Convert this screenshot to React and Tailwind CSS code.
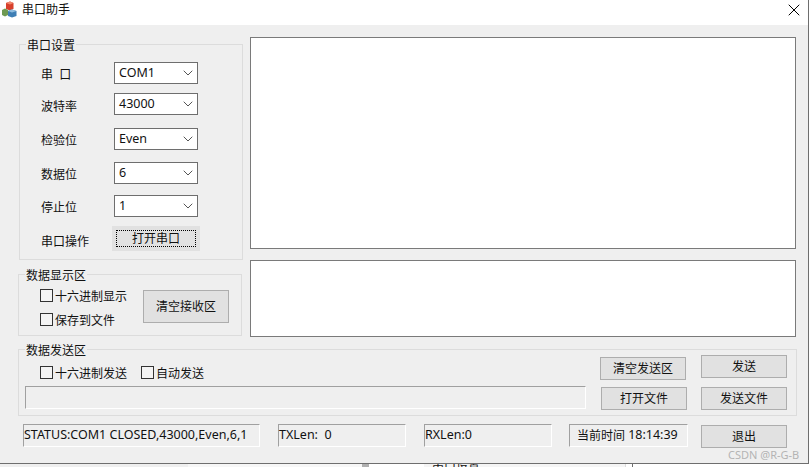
import React from "react";
import { ChevronDown, X } from "lucide-react";

const font = { fontFamily: '"Noto Sans", "Noto Sans CJK SC", sans-serif' };

const Combo = ({ label, value, labelClass = "pt-[3px]", className = "" }) => (
  <div className={`flex items-center h-[22px] ${className}`}>
    <span className={`w-[73px] ml-[21px] whitespace-pre ${labelClass}`}>{label}</span>
    <div className="w-[84px] h-[22px] flex items-center justify-between bg-white border border-[#6e6e6e] pl-[4px] pr-px text-[12.5px]">
      <span>{value}</span>
      <ChevronDown className="w-4 h-4 text-[#555]" strokeWidth={1.5} />
    </div>
  </div>
);

const Check = ({ label, className = "" }) => (
  <label className={`flex items-center ${className}`}>
    <span className="w-[13px] h-[13px] border border-[#333] bg-[#f4f4f4] mr-[2px]" />
    <span className="pt-[3px]">{label}</span>
  </label>
);

const Btn = ({ children, className = "" }) => (
  <button className={`w-[86px] h-[23px] bg-[#e1e1e1] border border-[#adadad] flex items-center justify-center ${className}`}>
    {children}
  </button>
);

const Sunken = ({ children, className = "" }) => (
  <div className={`h-[23px] flex items-center border border-t-[#a0a0a0] border-l-[#a0a0a0] border-r-white border-b-white ${className}`}>
    {children}
  </div>
);

const Group = ({ title, className = "", children }) => (
  <fieldset className={`border border-[#dcdcdc] ${className}`}>
    <legend className="ml-[6px] px-px h-[18px] leading-[22px]">{title}</legend>
    {children}
  </fieldset>
);

const AppIcon = () => (
  <svg width="16" height="17" viewBox="0 0 16 17" className="mt-px">
    <path d="M5 2l4-1.500 3.500 1.500v6L9 9.500 5 8z" fill="#d8402c" />
    <path d="M5 2l4 1.500 3.500-1.500L9 .5z" fill="#f08a70" />
    <path d="M1 9l3-1.500 3 1.500v5l-3 1.500-3-1.500z" fill="#6f9a52" />
    <path d="M7 10l3.500-1.500L15.500 10v5l-4.500 1.500L7 15z" fill="#3f7fb5" />
    <path d="M7 10l4 1.500 4.500-1.500-5-1.500z" fill="#8fbde0" />
  </svg>
);

export default function App() {
  return (
    <div className="w-[810px] h-[467px] overflow-hidden bg-white text-[12px] text-[#111] relative" style={font}>
      <div className="h-[464px] w-[809px] border-r border-b border-[#6e6e6e] flex flex-col">
        <div className="h-[25px] bg-white flex items-start pl-[1px]">
          <AppIcon />
          <span className="ml-[5px] leading-[19px]">串口助手</span>
          <X className="ml-auto mr-[4px] w-5 h-5 text-black" strokeWidth={1.2} />
        </div>

        <div className="flex-1 bg-[#efefef] pt-[10px] pl-[18px]">
          <div className="flex">
            <div className="w-[225px]">
              <Group title="串口设置" className="ml-px w-[224px] h-[225px]">
                <Combo label="串  口" value="COM1" className="mt-[9px]" />
                <Combo label="波特率" value="43000" labelClass="pt-[6px]" className="mt-[9px]" />
                <Combo label="检验位" value="Even" labelClass="pt-[3px]" className="mt-[13px]" />
                <Combo label="数据位" value="6" className="mt-[12px]" />
                <Combo label="停止位" value="1" className="mt-[11px]" />
                <div className="flex items-center mt-[9px]">
                  <span className="w-[71px] ml-[21px] pt-[7px]">串口操作</span>
                  <div className="w-[88px] h-[25px] bg-[#e1e1e1] p-[4px]">
                    <div className="h-[17px] border border-dotted border-black flex items-center justify-center">打开串口</div>
                  </div>
                </div>
              </Group>
              <Group title="数据显示区" className="w-[224px] h-[71px] mt-[5px]">
                <div className="flex">
                  <div className="w-[125px]">
                    <Check label="十六进制显示" className="ml-[21px] h-[16px] mt-[4px]" />
                    <Check label="保存到文件" className="ml-[21px] h-[16px] mt-[8px]" />
                  </div>
                  <Btn className="h-[33px] mt-[7px] ml-[-1px]">清空接收区</Btn>
                </div>
              </Group>
            </div>
            <div className="w-[546px] ml-[7px] mt-[2px]">
              <div className="h-[212px] bg-white border border-[#7a7a7a]" />
              <div className="h-[77px] mt-[11px] bg-white border border-[#7a7a7a]" />
            </div>
          </div>

          <Group title="数据发送区" className="w-[779px] h-[76px] mt-[3px]">
            <div className="flex">
              <div className="w-[575px]">
                <div className="flex h-[16px] mt-[6px]">
                  <Check label="十六进制发送" className="ml-[21px]" />
                  <Check label="自动发送" className="ml-[14px]" />
                </div>
                <Sunken className="ml-[6px] w-[561px] mt-[6px]" />
              </div>
              <div className="flex flex-col ml-[6px]">
                <Btn className="mt-[-1px]">清空发送区</Btn>
                <Btn className="mt-[7px] ml-px">打开文件</Btn>
              </div>
              <div className="flex flex-col ml-[14px]">
                <Btn className="mt-[-3px]">发送</Btn>
                <Btn className="mt-[9px]">发送文件</Btn>
              </div>
            </div>
          </Group>

          <div className="flex items-start mt-[8px]">
            <Sunken className="ml-[5px] w-[237px] whitespace-nowrap text-[12.5px]">STATUS:COM1 CLOSED,43000,Even,6,1</Sunken>
            <Sunken className="ml-[18px] w-[128px] text-[12.5px] whitespace-pre">TXLen:  0</Sunken>
            <Sunken className="ml-[18px] w-[128px] text-[12.5px]">RXLen:0</Sunken>
            <Sunken className="ml-[17px] w-[119px] pl-[7px] whitespace-pre">当前时间 <span className="text-[12.5px]">18:14:39</span></Sunken>
            <Btn className="ml-[13px] mt-px">退出</Btn>
          </div>
        </div>
      </div>

      {/* leftover desktop showing under the window */}
      <div className="flex h-[3px]">
        <div className="w-[188px] bg-[#efefef]" />
        <div className="w-[174px] bg-[#f7f7f7]" />
        <div className="w-[7px] bg-[#b0b0b0]" />
        <div className="w-[55px] bg-white" />
        <div className="w-[202px] h-[3px] bg-[#f5f5f5] border-r border-[#dcdcdc] overflow-hidden text-[12px] leading-[3px] pl-[8px]">串口设置</div>
        <div className="w-[6px] bg-white" />
        <div className="w-px bg-[#6e6e6e]" />
      </div>
      <span className="absolute left-[728px] top-[447px] text-[11px] text-[#b4b4b4]">CSDN @R-G-B</span>
    </div>
  );
}
